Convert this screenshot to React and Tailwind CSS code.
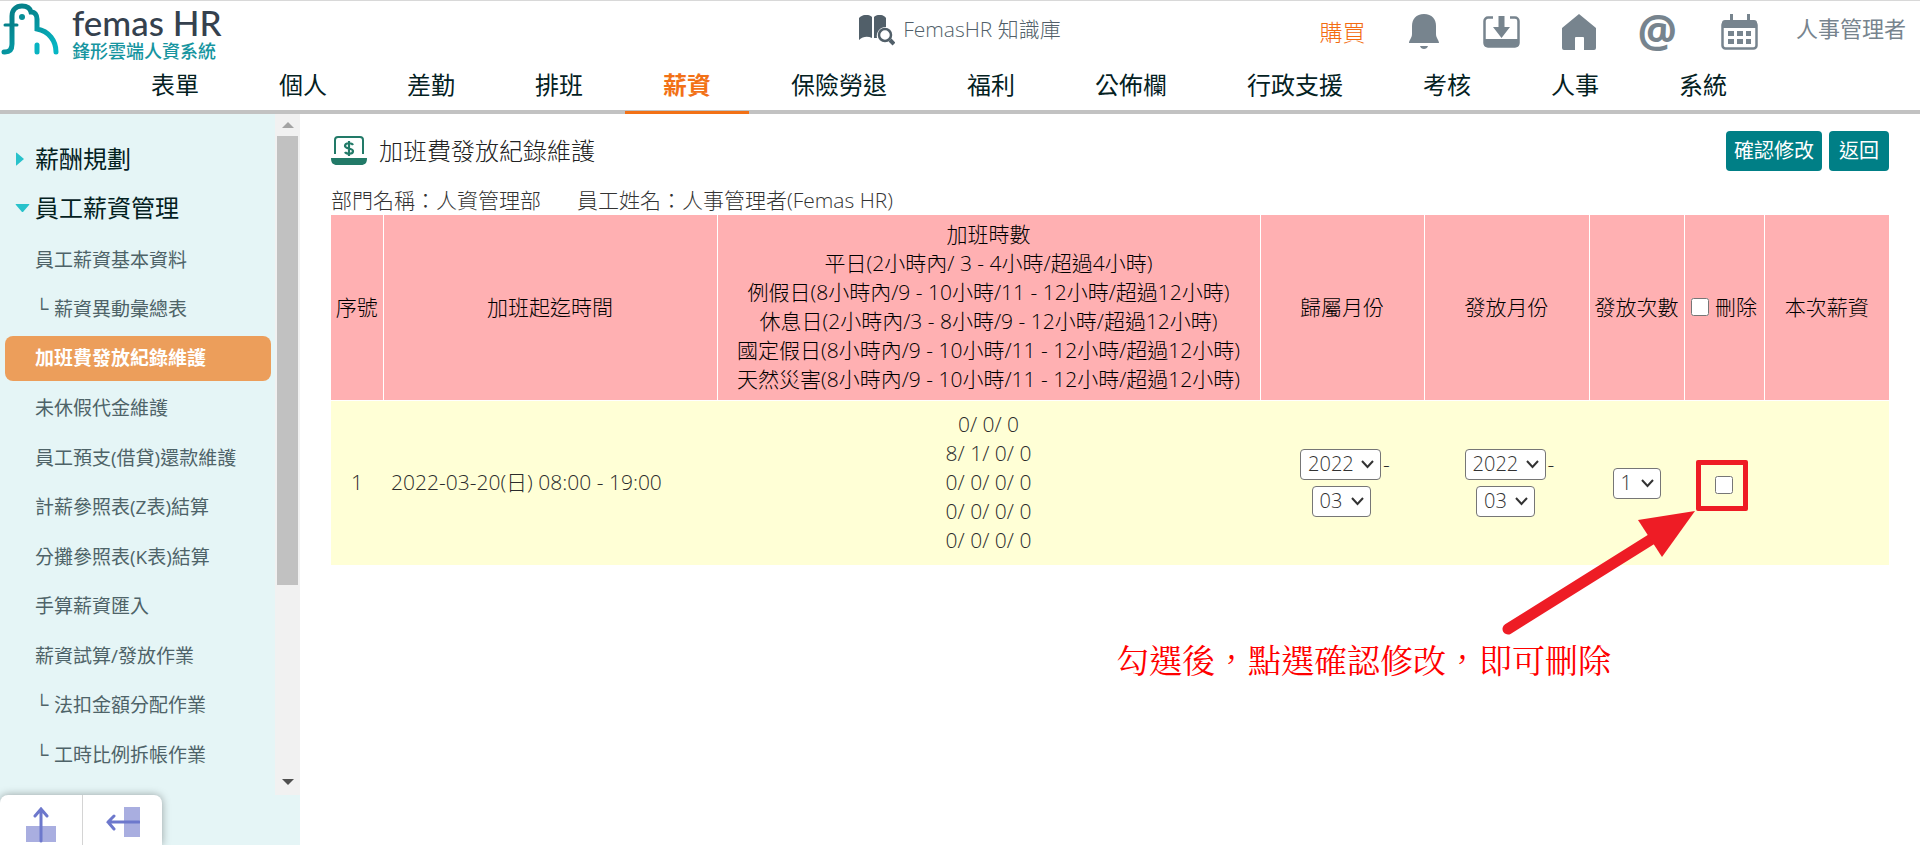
const menus = [
  '表單', '個人', '差勤', '排班', '薪資', '保險勞退',
  '福利', '公佈欄', '行政支援', '考核', '人事', '系統',
];

const sideItems = [
  { label: '員工薪資基本資料' },
  { label: '薪資異動彙總表', child: true },
  { label: '加班費發放紀錄維護', active: true },
  { label: '未休假代金維護' },
  { label: '員工預支(借貸)還款維護' },
  { label: '計薪參照表(Z表)結算' },
  { label: '分攤參照表(K表)結算' },
  { label: '手算薪資匯入' },
  { label: '薪資試算/發放作業' },
  { label: '法扣金額分配作業', child: true },
  { label: '工時比例拆帳作業', child: true },
];

const hourRules = [
  '加班時數',
  '平日(2小時內/ 3 - 4小時/超過4小時)',
  '例假日(8小時內/9 - 10小時/11 - 12小時/超過12小時)',
  '休息日(2小時內/3 - 8小時/9 - 12小時/超過12小時)',
  '國定假日(8小時內/9 - 10小時/11 - 12小時/超過12小時)',
  '天然災害(8小時內/9 - 10小時/11 - 12小時/超過12小時)',
];

const hours = ['0/ 0/ 0', '8/ 1/ 0/ 0', '0/ 0/ 0/ 0', '0/ 0/ 0/ 0', '0/ 0/ 0/ 0'];

const Logo = () => (
  <a href="#home" className="flex items-start">
    <svg viewBox="0 0 60 56" className="h-14 w-15 shrink-0" fill="none" strokeLinecap="round" aria-hidden="true">
      <defs>
        <linearGradient id="bird" gradientUnits="userSpaceOnUse" x1="10" y1="8" x2="50" y2="52">
          <stop offset="0.2" stopColor="#05828b" />
          <stop offset="1" stopColor="#06b6c4" />
        </linearGradient>
      </defs>
      <path
        d="M4 51h1c5 0 7-3 7-8V15C12 9 16 5 22 5c5 0 8 2 9 6 4 0 6 3 6 7v10c12 2 19 12 19 23"
        stroke="url(#bird)"
        strokeWidth="5"
      />
      <path d="M5 24h12" stroke="#05828b" strokeWidth="3" />
      <path d="M37 44v7" stroke="#08b3c1" strokeWidth="5" />
      <circle cx="22" cy="16" r="3" fill="#078f98" />
    </svg>
    <span className="ml-3 flex flex-col">
      <span className="font-['Lato'] text-[35px] leading-[42px] font-medium whitespace-nowrap text-[#35414e]">femas HR</span>
      <span className="text-lg leading-4 font-medium whitespace-nowrap text-[#1695a0]">鋒形雲端人資系統</span>
    </span>
  </a>
);

const BookIcon = () => (
  <svg viewBox="0 0 36 31" className="h-[31px] w-9" aria-hidden="true">
    <path d="M0 3C4-1 10-1 13 2v21C9 21 4 21 0 25z" fill="#515f69" />
    <path d="M15 2c3-3 9-3 12 1v9a9 9 0 0 0-9 11h-3z" fill="#515f69" />
    <circle cx="26" cy="20" r="6" fill="none" stroke="#515f69" strokeWidth="2.500" />
    <path d="m31 25 4 4" stroke="#515f69" strokeWidth="4" />
  </svg>
);

const BellIcon = () => (
  <svg viewBox="0 0 30 36" className="h-9 w-[30px]" fill="currentColor" aria-hidden="true">
    <path d="M15 0C7 0 3 5 3 12v8c0 4-3 6-3 9h30c0-3-3-5-3-9v-8C27 5 23 0 15 0zM11 32h8c-1 4-7 4-8 0z" />
  </svg>
);

const DownloadIcon = () => (
  <svg viewBox="0 0 37 32" className="h-8 w-[37px]" aria-hidden="true">
    <path d="M10 1.500H5A3.500 3.500 0 0 0 1.500 5v22A3.500 3.500 0 0 0 5 30.500h27a3.500 3.500 0 0 0 3.500-3.500V5A3.500 3.500 0 0 0 32 1.500h-5" fill="none" stroke="currentColor" strokeWidth="2.500" />
    <path d="M1 23h35v5a3 3 0 0 1-3 3H4a3 3 0 0 1-3-3zM15.500 0h6v11H27l-8.500 11L10 11h5.500z" fill="currentColor" />
  </svg>
);

const HomeIcon = () => (
  <svg viewBox="0 0 34 36" className="h-9 w-[34px]" fill="currentColor" aria-hidden="true">
    <path d="M17 0 34 14v20a2 2 0 0 1-2 2H22V24q0-1-1-1h-7q-1 0-1 1v12H2a2 2 0 0 1-2-2V14z" />
  </svg>
);

const CalendarIcon = () => (
  <svg viewBox="0 0 37 36" className="h-9 w-[37px]" aria-hidden="true">
    <rect x="1.500" y="8" width="34" height="26.500" rx="3" fill="none" stroke="currentColor" strokeWidth="2.500" />
    <path d="M1 13V9a3 3 0 0 1 3-3h29a3 3 0 0 1 3 3v5H1zM9 0h3v6H9zM26 0h3v6h-3z" fill="currentColor" />
    <path d="M7 17h6v5H7zM16 17h6v5h-6zM25 17h5v5h-5zM7 25h6v5H7zM16 25h6v5h-6zM25 25h5v5h-5z" fill="currentColor" />
  </svg>
);

const LaptopIcon = () => (
  <svg viewBox="0 0 36 30" className="h-[30px] w-9" fill="none" stroke="#227a68" aria-hidden="true">
    <path d="M4 18V4a3 3 0 0 1 3-3h22a3 3 0 0 1 3 3v14" strokeWidth="2" />
    <path d="M0 22h36c0 5-2 7-6 7H6c-4 0-6-2-6-7z" fill="#227a68" stroke="none" />
    <path d="M22 9c-1-2-8-3-8 1 0 3 8 2 8 5 0 4-7 3-8 1M18 5v15" strokeWidth="2.200" />
  </svg>
);

const Header = () => (
  <header className="border-t border-[#d8d8d8] border-b-4 border-b-[#c2c2c2]">
    <div className="grid h-[58px] grid-cols-[1fr_auto_1fr]">
      <Logo />
      <a href="#kb" className="flex items-center gap-2 text-[21px] font-light text-[#515f69]">
        <BookIcon />
        <span>FemasHR 知識庫</span>
      </a>
      <div className="flex items-center justify-end pt-1 pr-[14px] text-[#77848e]">
        <a href="#buy" className="mr-[43px] text-[23px] font-light whitespace-nowrap text-[#f36c11]">購買</a>
        <button type="button" aria-label="通知" className="mr-11"><BellIcon /></button>
        <button type="button" aria-label="下載" className="mr-[42px]"><DownloadIcon /></button>
        <button type="button" aria-label="首頁" className="mr-[42px]"><HomeIcon /></button>
        <button type="button" className="mr-11 pb-1 font-['Open_Sans'] text-[44px] leading-10 font-bold">@</button>
        <button type="button" aria-label="行事曆" className="mr-[38px]"><CalendarIcon /></button>
        <span className="pb-2 text-[22px] whitespace-nowrap">人事管理者</span>
      </div>
    </div>
    <nav className="-mb-1 flex gap-1 pl-[113px]">
      {menus.map((menu) => (
        <a
          key={menu}
          href={`#${menu}`}
          className={
            menu === '薪資'
              ? 'h-[55px] border-b-3 border-[#f27116] px-[38px] text-2xl leading-[52px] font-bold whitespace-nowrap text-[#f27116]'
              : 'h-[55px] px-[38px] text-2xl leading-[52px] whitespace-nowrap text-[#04211f]'
          }
        >
          {menu}
        </a>
      ))}
    </nav>
  </header>
);

const SideItem = ({ label, child, active }) => {
  if (active) {
    return (
      <a
        href="#current"
        aria-current="page"
        className="mt-[2px] mr-1 mb-[3px] ml-[5px] flex h-[45px] items-center rounded-lg bg-[#ec9e5b] pl-[30px] text-[19px] font-bold text-white"
      >
        {label}
      </a>
    );
  }
  return (
    <a
      href={`#${label}`}
      className="flex h-[50px] items-center pl-[35px] text-[19px] text-[#4e6368] even:h-[49px]"
    >
      {child ? <span className="w-[19px] font-['Liberation_Sans']">└</span> : null}
      {label}
    </a>
  );
};

const Sidebar = () => (
  <aside className="flex w-[300px] shrink-0 flex-col overflow-hidden bg-[#e5f5f6]">
    <div className="flex min-h-0 flex-1">
      <div className="w-[275px] overflow-hidden pt-5">
        <button type="button" className="flex h-[49px] w-full items-center pl-4 text-2xl text-[#04211f]">
          <svg viewBox="0 0 8 14" className="mr-[11px] h-[14px] w-2" aria-hidden="true">
            <path d="M0 1q0-1 1 0l7 6-7 6q-1 1-1 0z" fill="#28c2cb" />
          </svg>
          薪酬規劃
        </button>
        <button type="button" className="mb-[3px] flex h-[49px] w-full items-center pl-[15px] text-2xl text-[#04211f]">
          <svg viewBox="0 0 15 8" className="mr-[5px] h-2 w-[15px]" aria-hidden="true">
            <path d="M1 0h13q1 0 0 1L8 8H7L1 1Q0 0 1 0z" fill="#28c2cb" />
          </svg>
          員工薪資管理
        </button>
        <div>
          {sideItems.map((item) => (
            <SideItem key={item.label} {...item} />
          ))}
        </div>
      </div>
      <div className="flex w-[25px] flex-col items-center bg-[#f1f1f1]" aria-hidden="true">
        <svg viewBox="0 0 12 6" className="my-2 h-[6px] w-3 shrink-0"><path d="M6 0l6 6H0z" fill="#a3a3a3" /></svg>
        <div className="h-[66%] w-[21px] bg-[#c1c1c1]" />
        <svg viewBox="0 0 12 6" className="mt-auto mb-[10px] h-[6px] w-3 shrink-0"><path d="M0 0h12L6 6z" fill="#505050" /></svg>
      </div>
    </div>
    <div className="flex h-[50px] w-[162px] shrink-0 rounded-t-lg bg-white shadow-[0_0_8px_rgba(0,0,0,0.35)]">
      <button type="button" aria-label="收合上方" className="flex w-[83px] justify-center border-r border-[#d4d4d4] pt-3">
        <svg viewBox="0 0 30 36" className="h-9 w-[30px]" fill="none" aria-hidden="true">
          <path d="M0 19h30v16H0z" fill="#a9aee0" />
          <path d="M15 34V3M9 9l6-7 6 7" stroke="#6d78cc" strokeWidth="3" strokeLinecap="round" />
        </svg>
      </button>
      <button type="button" aria-label="收合左側" className="flex flex-1 justify-center pt-3">
        <svg viewBox="0 0 34 30" className="h-[30px] w-[34px]" fill="none" aria-hidden="true">
          <path d="M18 0h16v30H18z" fill="#a9aee0" />
          <path d="M33 15H2M8 9l-6 6 6 7" stroke="#6d78cc" strokeWidth="3" strokeLinecap="round" />
        </svg>
      </button>
    </div>
  </aside>
);

const Select = ({ label, value, className }) => (
  <span className={`relative inline-block h-[31px] ${className}`}>
    <select
      aria-label={label}
      defaultValue={value}
      className="block h-full w-full appearance-none rounded border border-[#767676] bg-white pl-[7px] text-xl leading-7 text-[#333]"
    >
      <option>{value}</option>
    </select>
    <svg viewBox="0 0 13 9" className="pointer-events-none absolute top-[11px] right-[7px] h-[9px] w-[13px]" aria-hidden="true">
      <path d="m1 1 5.500 6L12 1" fill="none" stroke="#333" strokeWidth="2" />
    </svg>
  </span>
);

const MonthPicker = ({ name }) => (
  <div className="flex flex-col items-center gap-[6px] pr-[2px]">
    <div className="flex items-center gap-[2px] pl-2">
      <Select label={`${name}年`} value="2022" className="w-[81px]" />
      -
    </div>
    <Select label={`${name}月`} value="03" className="w-[59px]" />
  </div>
);

// Callout drawn over the page, anchored to the row's delete checkbox
const DeleteHint = () => (
  <div className="pointer-events-none">
    <div className="absolute -top-4 -left-[19px] h-[51px] w-[52px] rounded-xs border-5 border-[#ee1c25]" />
    <svg viewBox="0 0 200 130" className="absolute top-[33px] -left-[216px] h-[130px] w-[200px] max-w-none" aria-hidden="true">
      <path d="M9 120 156 28" stroke="#ee1c25" strokeWidth="11" strokeLinecap="round" />
      <path d="M196 2 139 11 163 48z" fill="#ee1c25" />
    </svg>
    <p className="absolute top-[162px] -left-[599px] font-['Liberation_Serif','Noto_Serif_CJK_TC','Noto_Sans_CJK_TC',serif] text-[33px] leading-12 font-normal whitespace-nowrap text-[#ff0000]">
      勾選後，點選確認修改，即可刪除
    </p>
  </div>
);

const OvertimeTable = () => (
  <table className="w-full table-fixed border-collapse text-center text-[21px] leading-[29px] font-light">
    <colgroup>
      <col className="w-[52px]" />
      <col className="w-[334px]" />
      <col />
      <col className="w-[164px]" />
      <col className="w-[165px]" />
      <col className="w-[95px]" />
      <col className="w-[80px]" />
      <col className="w-[125px]" />
    </colgroup>
    <thead className="bg-[#ffb0b2] text-black">
      <tr className="h-[185px] border-b border-white [&>th]:border-r [&>th]:border-white [&>th]:font-light [&>th:last-child]:border-r-0">
        <th scope="col">序號</th>
        <th scope="col">加班起迄時間</th>
        <th scope="col">
          {hourRules.map((rule) => (
            <div key={rule} className="whitespace-nowrap">{rule}</div>
          ))}
        </th>
        <th scope="col">歸屬月份</th>
        <th scope="col">發放月份</th>
        <th scope="col">發放次數</th>
        <th scope="col">
          <label className="flex items-center justify-center gap-[6px] whitespace-nowrap">
            <input type="checkbox" className="size-[18px]" />
            刪除
          </label>
        </th>
        <th scope="col">本次薪資</th>
      </tr>
    </thead>
    <tbody className="bg-[#ffffd6] text-[#2b2b2b]">
      <tr className="h-[165px]">
        <td>1</td>
        <td className="pl-2 text-left">2022-03-20(日) 08:00 - 19:00</td>
        <td>
          {hours.map((line, index) => (
            <div key={index}>{line}</div>
          ))}
        </td>
        <td><MonthPicker name="歸屬" /></td>
        <td><MonthPicker name="發放" /></td>
        <td><Select label="發放次數" value="1" className="w-12 align-middle" /></td>
        <td className="pt-1">
          <div className="relative mx-auto flex size-[18px]">
            <input type="checkbox" aria-label="刪除第1筆" className="size-[18px]" />
            <DeleteHint />
          </div>
        </td>
        <td />
      </tr>
    </tbody>
  </table>
);

export default function App() {
  return (
    <div className="flex h-screen flex-col overflow-hidden bg-white font-['Open_Sans','Noto_Sans_CJK_TC',sans-serif]">
      <Header />
      <div className="flex min-h-0 flex-1">
        <Sidebar />
        <main className="min-w-0 flex-1 pt-[17px] pr-[31px] pl-[31px]">
          <div className="flex items-center justify-between">
            <h1 className="flex items-center gap-3 text-2xl font-light text-[#222]">
              <LaptopIcon />
              加班費發放紀錄維護
            </h1>
            <div className="flex gap-[7px] text-xl text-white">
              <button type="button" className="h-10 rounded bg-[#007f86] px-2">確認修改</button>
              <button type="button" className="h-10 rounded bg-[#007f86] px-[10px]">返回</button>
            </div>
          </div>
          <p className="mt-[14px] flex gap-9 text-[21px] leading-[30px] font-light text-[#333]">
            <span>部門名稱：人資管理部</span>
            <span>員工姓名：人事管理者(Femas HR)</span>
          </p>
          <OvertimeTable />
        </main>
      </div>
    </div>
  );
}
